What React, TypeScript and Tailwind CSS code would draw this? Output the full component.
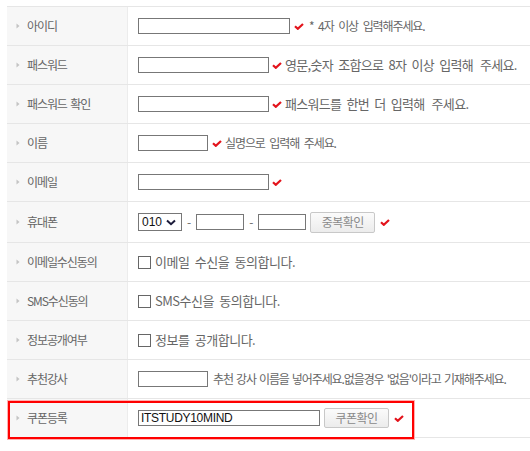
import React from "react";

const Check = () => (
  <svg width="10" height="7" viewBox="0 0 10 7" className="shrink-0">
    <path d="M1 3.2 L3.8 5.8 L9 1" fill="none" stroke="#e3141c" strokeWidth="2.2" />
  </svg>
);

const Arrow = () => (
  <svg width="4" height="6" viewBox="0 0 4 6" className="shrink-0">
    <path d="M0.5 0.5 L3.5 3 L0.5 5.5 Z" fill="#c4c4c4" />
  </svg>
);

const Label = ({ children }: { children: React.ReactNode }) => (
  <div className="w-[121px] shrink-0 h-full bg-[#f7f7f7] border-r border-[#ececec] flex items-center pl-[9px] gap-[7px] text-[12px] tracking-[-1.1px] [word-spacing:2px] text-[#666]">
    <Arrow />
    <span>{children}</span>
  </div>
);

const Row = ({
  label,
  children,
  tall,
}: {
  label: string;
  children: React.ReactNode;
  tall?: boolean;
}) => (
  <div className={`flex border-b border-[#e6e6e6] ${tall ? "h-[41px]" : "h-[39px]"}`}>
    <Label>{label}</Label>
    <div className="flex items-center pl-[10px]">{children}</div>
  </div>
);

const Input = ({ w, value }: { w: string; value?: string }) => (
  <div
    className={`${w} h-[16px] border border-[#777] bg-white shrink-0 flex items-center pl-[2px] text-[12px] tracking-[-0.3px] text-[#111] leading-none`}
    style={{ fontFamily: '"Liberation Sans", Arial, sans-serif' }}
  >
    {value}
  </div>
);

const Btn = ({ children, h }: { children: React.ReactNode; h: string }) => (
  <div
    className={`w-[65px] ${h} shrink-0 border border-[#c8c8c8] rounded-[2px] bg-gradient-to-b from-[#fbfbfb] to-[#ececec] flex items-center justify-center text-[12px] tracking-[-0.5px] text-[#8a8a8a]`}
  >
    {children}
  </div>
);

const Box = () => (
  <div className="w-[13px] h-[13px] border border-[#666] bg-white shrink-0" />
);

const Hint = ({ children, cls, ml }: { children: React.ReactNode; cls: string; ml: string }) => (
  <span className={`${ml} whitespace-pre text-[#666] ${cls}`}>{children}</span>
);

const SMALL = "text-[12px] tracking-[-1.1px] [word-spacing:3px]";
const BIG = "text-[13px] tracking-[-0.7px] [word-spacing:3px]";
const BOX = "text-[13px] tracking-[-0.5px] [word-spacing:3px]";

export default function App() {
  return (
    <div
      className="w-[530px] h-[451px] bg-white pt-[6px] pl-[7px] overflow-hidden"
      style={{ fontFamily: '"Noto Sans CJK KR", "Noto Sans", sans-serif' }}
    >
      <div className="border-t border-[#e6e6e6]">
        <Row label="아이디">
          <Input w="w-[152px]" />
          <span className="ml-[4px]"><Check /></span>
          <Hint cls={SMALL} ml="ml-[5px]">* 4자 이상 입력해주세요.</Hint>
        </Row>
        <Row label="패스워드">
          <Input w="w-[131px]" />
          <span className="ml-[3px]"><Check /></span>
          <Hint cls={BIG} ml="ml-[3px]">{"영문,숫자 조합으로 8자 이상 입력해 \u2009주세요."}</Hint>
        </Row>
        <Row label="패스워드 확인">
          <Input w="w-[131px]" />
          <span className="ml-[3px]"><Check /></span>
          <Hint cls={BIG} ml="ml-[3px]">{"패스워드를 한번 더 입력해 \u2009주세요."}</Hint>
        </Row>
        <Row label="이름">
          <Input w="w-[70px]" />
          <span className="ml-[4px]"><Check /></span>
          <Hint cls={SMALL} ml="ml-[3px]">실명으로 입력해 주세요.</Hint>
        </Row>
        <Row label="이메일">
          <Input w="w-[131px]" />
          <span className="ml-[3px]"><Check /></span>
        </Row>
        <Row label="휴대폰" tall>
          <div
            className="w-[44px] h-[18px] border border-[#777] bg-white shrink-0 flex items-center pl-[3px] gap-[4px] text-[12px] text-[#111]"
            style={{ fontFamily: '"Liberation Sans", Arial, sans-serif' }}
          >
            <span>010</span>
            <svg width="10" height="7" viewBox="0 0 10 7">
              <path d="M1 1.5 L5 5.2 L9 1.5" fill="none" stroke="#1b1b3a" strokeWidth="2" />
            </svg>
          </div>
          <span className="mx-[5px] text-[12px] text-[#666]">-</span>
          <Input w="w-[48px]" />
          <span className="mx-[5px] text-[12px] text-[#666]">-</span>
          <Input w="w-[48px]" />
          <span className="ml-[4px]"><Btn h="h-[21px]">중복확인</Btn></span>
          <span className="ml-[5px]"><Check /></span>
        </Row>
        <Row label="이메일수신동의">
          <Box />
          <Hint cls={BOX} ml="ml-[4px]">이메일 수신을 동의합니다.</Hint>
        </Row>
        <Row label="SMS수신동의">
          <Box />
          <Hint cls={BOX} ml="ml-[4px]">SMS수신을 동의합니다.</Hint>
        </Row>
        <Row label="정보공개여부">
          <Box />
          <Hint cls={BOX} ml="ml-[4px]">정보를 공개합니다.</Hint>
        </Row>
        <Row label="추천강사">
          <Input w="w-[70px]" />
          <Hint cls="text-[12px] tracking-[-1.1px] [word-spacing:1.5px]" ml="ml-[5px]">
            추천 강사 이름을 넣어주세요.없을경우 '없음'이라고 기재해주세요.
          </Hint>
        </Row>
        <div className="relative">
          <Row label="쿠폰등록">
            <Input w="w-[182px]" value="ITSTUDY10MIND" />
            <span className="ml-[4px]"><Btn h="h-[20px]">쿠폰확인</Btn></span>
            <span className="ml-[5px]"><Check /></span>
          </Row>
          <div className="absolute left-[1px] top-[2px] w-[406px] h-[38px] border-2 border-[#ff0000] shadow-[0_0_0_1px_#ffb0b0] pointer-events-none" />
        </div>
      </div>
    </div>
  );
}
